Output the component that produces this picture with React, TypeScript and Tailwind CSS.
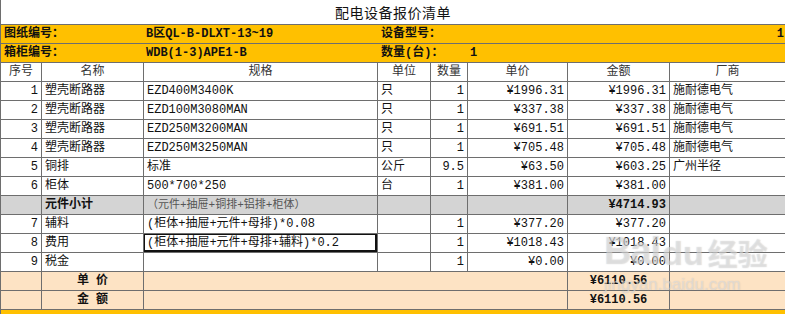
import React from 'react'

const grid = 'grid grid-cols-[41px_102px_234px_53px_37px_100px_102px_1fr]'
const line = 'border-[#6e6e6e]'
const cellBase = `h-[19px] border-b ${line} flex items-center px-[3px] overflow-hidden whitespace-nowrap`

type Align = 'l' | 'r' | 'c'
const align: Align[] = ['r', 'l', 'l', 'l', 'r', 'r', 'r', 'l']

const items: string[][] = [
  ['1', '塑壳断路器', 'EZD400M3400K', '只', '1', '¥1996.31', '¥1996.31', '施耐德电气'],
  ['2', '塑壳断路器', 'EZD100M3080MAN', '只', '1', '¥337.38', '¥337.38', '施耐德电气'],
  ['3', '塑壳断路器', 'EZD250M3200MAN', '只', '1', '¥691.51', '¥691.51', '施耐德电气'],
  ['4', '塑壳断路器', 'EZD250M3250MAN', '只', '1', '¥705.48', '¥705.48', '施耐德电气'],
  ['5', '铜排', '标准', '公斤', '9.5', '¥63.50', '¥603.25', '广州半径'],
  ['6', '柜体', '500*700*250', '台', '1', '¥381.00', '¥381.00', ''],
]

const extras: string[][] = [
  ['7', '辅料', '(柜体+抽屉+元件+母排)*0.08', '', '1', '¥377.20', '¥377.20', ''],
  ['8', '费用', '(柜体+抽屉+元件+母排+辅料)*0.2', '', '1', '¥1018.43', '¥1018.43', ''],
  ['9', '税金', '', '', '1', '¥0.00', '¥0.00', ''],
]

function Cell({ children, a = 'l', last = false, className = '' }: { children?: React.ReactNode; a?: Align; last?: boolean; className?: string }) {
  const j = a === 'r' ? 'justify-end' : a === 'c' ? 'justify-center' : 'justify-start'
  return <div className={`${cellBase} ${j} ${last ? '' : 'border-r'} ${className}`}>{children}</div>
}

function DataRow({ row, selected = -1 }: { row: string[]; selected?: number }) {
  return (
    <div className={grid}>
      {row.map((v, i) => (
        <Cell key={i} a={align[i]} last={i === 7} className={i === selected ? 'relative' : ''}>
          {v}
          {i === selected && <div className="absolute -left-px -top-px -right-0 bottom-0 border-2 border-[#111] outline outline-1 outline-[#999]" />}
        </Cell>
      ))}
    </div>
  )
}

export default function App() {
  return (
    <div className="relative w-[785px] h-[314px] overflow-hidden bg-white border-l border-[#6e6e6e] text-[12px] leading-none text-[#111] font-['Liberation_Mono','Noto_Sans_CJK_SC',monospace]">
      {/* title */}
      <div className={`h-[25px] border-b ${line} flex items-center justify-center text-[14px] font-['Noto_Sans_CJK_SC',sans-serif] tracking-[0.5px]`}>
        配电设备报价清单
      </div>

      {/* info rows */}
      <div className={`${grid} bg-[#ffc000] font-bold`}>
        <div className={`col-span-2 h-[19px] border-b ${line} flex items-center pl-[3px]`}>图纸编号：</div>
        <div className={`h-[19px] border-b ${line} flex items-center pl-[2px]`}>B区QL-B-DLXT-13~19</div>
        <div className={`col-span-5 h-[19px] border-b ${line} flex items-center justify-between pl-[3px] pr-[1px]`}>
          <span>设备型号：</span>
          <span>1</span>
        </div>
      </div>
      <div className={`${grid} bg-[#ffc000] font-bold`}>
        <div className={`col-span-2 h-[19px] border-b ${line} flex items-center pl-[3px]`}>箱柜编号：</div>
        <div className={`h-[19px] border-b ${line} flex items-center pl-[2px]`}>WDB(1-3)APE1-B</div>
        <div className={`col-span-2 h-[19px] border-b ${line} flex items-center pl-[3px]`}>数量(台)：</div>
        <div className={`col-span-3 h-[19px] border-b ${line} flex items-center pl-[2px]`}>1</div>
      </div>

      {/* header */}
      <div className={`${grid} text-[#333]`}>
        {['序号', '名称', '规格', '单位', '数量', '单价', '金额', '厂商'].map((h, i) => (
          <Cell key={h} a="c" last={i === 7}>{h}</Cell>
        ))}
      </div>

      {items.map((r) => (
        <DataRow key={r[0]} row={r} />
      ))}

      {/* subtotal */}
      <div className={`${grid} bg-[#d4d4d4]`}>
        <Cell />
        <Cell className="font-bold">元件小计</Cell>
        <Cell className="text-[11px] text-[#555]">（元件+抽屉+铜排+铝排+柜体）</Cell>
        <Cell />
        <Cell />
        <Cell />
        <Cell a="r" className="font-bold">¥4714.93</Cell>
        <Cell last />
      </div>

      {extras.map((r) => (
        <DataRow key={r[0]} row={r} selected={r[0] === '8' ? 2 : -1} />
      ))}

      {/* totals */}
      {['单价', '金额'].map((t) => (
        <div key={t} className={`${grid} bg-[#fde3c4] font-bold`}>
          <Cell />
          <Cell a="c" className="tracking-[7px] pl-[10px]">{t}</Cell>
          <div className={`col-span-4 h-[19px] border-r border-b ${line}`} />
          <Cell a="c">¥6110.56</Cell>
          <Cell last />
        </div>
      ))}
      <div className="h-[6px] bg-[#ffc000]" />

      {/* watermark */}
      <div className="pointer-events-none absolute left-[603px] top-[232px] flex flex-col items-start text-white/40 [text-shadow:0_0_1px_rgba(150,150,150,0.5)] font-['Liberation_Sans','Noto_Sans_CJK_SC',sans-serif]">
        <div className="flex items-end gap-[2px] leading-none">
          <span className="text-[38px] font-bold tracking-[-1px]">Bai</span>
          <span className="text-[34px] font-bold">du</span>
          <span className="text-[30px] font-bold ml-[2px]">经验</span>
        </div>
        <div className="text-[17px] leading-none mt-[6px]">jingyan.baidu.com</div>
      </div>
    </div>
  )
}
